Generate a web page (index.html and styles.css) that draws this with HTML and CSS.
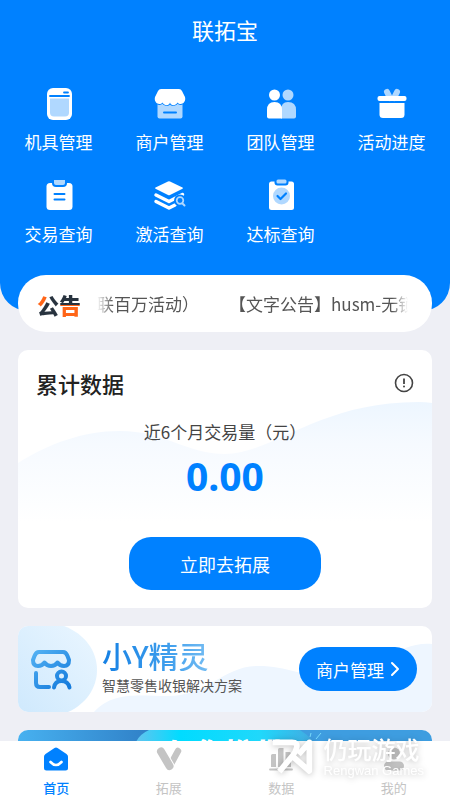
FILE: index.html
```html
<!DOCTYPE html>
<html lang="zh-CN">
<head>
<meta charset="utf-8">
<meta name="viewport" content="width=device-width, initial-scale=1">
<title>联拓宝</title>
<link rel="stylesheet" href="styles.css">
</head>
<body>
<div class="app">
  <main class="content">
    <header class="hero">
      <h1 class="hero-title">联拓宝</h1>
      <nav class="menu">
        <a class="menu-item" href="#">
          <svg class="menu-icon" viewBox="0 0 36 36"><rect x="6" y="2" width="25" height="32" rx="6" fill="#fff"/><path d="M9 12.500H28V26.500Q28 30.500 24 30.500H13Q9 30.500 9 26.500Z" fill="#b0d8ff"/><path d="M9 10H28M23 6.500H27" stroke="#0081ff" stroke-width="1.800" stroke-linecap="round"/></svg>
          <span>机具管理</span>
        </a>
        <a class="menu-item" href="#">
          <svg class="menu-icon" viewBox="0 0 36 36"><path d="M5.500 15H30.500V30.500Q30.500 32.500 28.500 32.500H7.500Q5.500 32.500 5.500 30.500Z" fill="#b0d8ff"/><path d="M9 3H27Q29 3 30 5L33 11C34.500 17 28.500 20 25.500 16.500C23.500 20 19 20 18 16.500C17 20 12.500 20 10.500 16.500C7.500 20 1.500 17 3 11L6 5Q7 3 9 3Z" fill="#fff" stroke="#0081ff" stroke-width="1.600" paint-order="stroke"/><path d="M12 26.500H24" stroke="#0081ff" stroke-width="2" stroke-linecap="round"/></svg>
          <span>商户管理</span>
        </a>
        <a class="menu-item" href="#">
          <svg class="menu-icon" viewBox="0 0 36 36"><circle cx="25" cy="9" r="5.500" fill="#b0d8ff"/><path d="M18 32.500V24Q18 16 25 16Q33 16 33 24V30.500Q33 32.500 31 32.500Z" fill="#b0d8ff"/><circle cx="11.500" cy="9" r="5.500" fill="#fff"/><path d="M4 30.500V24Q4 16 11.500 16Q19 16 19 24V32.500H6Q4 32.500 4 30.500Z" fill="#fff"/></svg>
          <span>团队管理</span>
        </a>
        <a class="menu-item" href="#">
          <svg class="menu-icon" viewBox="0 0 36 36"><path d="M13 6L16 12M23 6L20 12" stroke="#b0d8ff" stroke-width="6" stroke-linecap="round"/><rect x="3.500" y="10" width="29" height="5" rx="2" fill="#fff"/><path d="M5.500 17H30.500V28.500Q30.500 32 27 32H9Q5.500 32 5.500 28.500Z" fill="#fff"/></svg>
          <span>活动进度</span>
        </a>
        <a class="menu-item" href="#">
          <svg class="menu-icon" viewBox="0 0 36 36"><rect x="5.500" y="5" width="26" height="27" rx="3.500" fill="#fff"/><path d="M11 2H26V5Q26 9 22 9H15Q11 9 11 5Z" fill="#0081ff"/><path d="M13 2H24V5Q24 7 22 7H15Q13 7 13 5Z" fill="#b0d8ff"/><path d="M13.500 16H23.500M13.500 21.500H23.500" stroke="#0081ff" stroke-width="2" stroke-linecap="round"/></svg>
          <span>交易查询</span>
        </a>
        <a class="menu-item" href="#">
          <svg class="menu-icon" viewBox="0 0 36 36"><path d="M16 3.500Q17 3 18 3.500L30.500 9.500Q31.500 10 30.500 10.800L18 17Q17 17.500 16 17L3.500 10.800Q2.500 10 3.500 9.500Z" fill="#fff"/><path d="M4 17L17 23.500L30.500 16.500M4 23.500L17 30L23 27" fill="none" stroke="#fff" stroke-width="3.500" stroke-linecap="round" stroke-linejoin="round"/><circle cx="28" cy="22.500" r="6" fill="#0081ff"/><circle cx="28" cy="22.500" r="3.300" fill="none" stroke="#b0d8ff" stroke-width="1.700"/><path d="M30.500 25.500L32.500 27.500" stroke="#b0d8ff" stroke-width="2" stroke-linecap="round"/></svg>
          <span>激活查询</span>
        </a>
        <a class="menu-item" href="#">
          <svg class="menu-icon" viewBox="0 0 36 36"><rect x="6" y="3.500" width="25" height="28.500" rx="2.500" fill="#fff"/><rect x="11.500" y="0" width="14" height="7.500" rx="3" fill="#0081ff"/><rect x="13.500" y="1.500" width="10" height="4" rx="1.500" fill="#b0d8ff"/><circle cx="18.500" cy="18" r="8.500" fill="#b0d8ff"/><path d="M14.500 18L17.500 21L23 15.500" fill="none" stroke="#0081ff" stroke-width="2.200" stroke-linecap="round" stroke-linejoin="round"/></svg>
          <span>达标查询</span>
        </a>
      </nav>
    </header>

    <section class="notice">
      <strong class="notice-logo"><span class="notice-gong">公</span><span class="notice-gao">告</span></strong>
      <div class="ticker"><span>联百万活动）</span><span>【文字公告】husm-无锁</span></div>
    </section>

    <section class="card stats">
      <svg class="wave" viewBox="0 0 414 120" preserveAspectRatio="none" aria-hidden="true">
        <defs><linearGradient id="mist" x1="0" y1="0" x2="0" y2="1"><stop offset="0" stop-color="#edf6ff"/><stop offset=".35" stop-color="#f6faff"/><stop offset="1" stop-color="#fff"/></linearGradient></defs>
        <path d="M0 61C30 42 65 29 102 29C145 29 170 52 207 52C255 52 300 0 400 0Q408 0 414 1V120H0Z" fill="url(#mist)"/>
      </svg>
      <div class="stats-head">
        <h2 class="stats-title">累计数据</h2>
        <button class="info" type="button" aria-label="说明">
          <svg viewBox="0 0 20 20"><circle cx="10" cy="10" r="8.500" fill="none" stroke="#444" stroke-width="1.600"/><path d="M10 5.500V11" stroke="#444" stroke-width="1.800"/><circle cx="10" cy="13.500" r="1" fill="#444"/></svg>
        </button>
      </div>
      <p class="stats-label">近6个月交易量（元）</p>
      <p class="stats-value">0.00</p>
      <button class="primary" type="button">立即去拓展</button>
    </section>

    <section class="card genie">
      <svg class="genie-bg" viewBox="0 0 414 86" preserveAspectRatio="none" aria-hidden="true">
        <defs><linearGradient id="disc" x1="0" y1="1" x2="1" y2="0"><stop offset="0" stop-color="#cfe9fd"/><stop offset="1" stop-color="#eaf6ff"/></linearGradient></defs>
        <path d="M76 86C95 65 120 70 150 70C190 70 205 40 240 40C275 40 290 55 325 50C360 44 380 15 414 18V86Z" fill="#eef6ff"/>
        <path d="M0 0H46C67 8 79 25 79 44C79 62 68 78 50 86H0Z" fill="url(#disc)"/>
      </svg>
      <svg class="shop" viewBox="0 0 42 42" aria-hidden="true">
        <defs><linearGradient id="shop" gradientUnits="userSpaceOnUse" x1="0" y1="0" x2="34" y2="42"><stop offset="0" stop-color="#59b6f5"/><stop offset="1" stop-color="#147bdc"/></linearGradient></defs>
        <g fill="none" stroke="url(#shop)" stroke-width="4" stroke-linecap="round" stroke-linejoin="round">
          <path d="M9 4H33Q36 4 37.500 8L39 12Q39 18 34 18Q30 18 27.500 14.500Q25 18 21 18Q17 18 14.500 14.500Q12 18 8 18Q3 18 3 12L4.500 8Q6 4 9 4Z"/>
          <path d="M6 25V35Q6 39 10 39H19"/><circle cx="31.500" cy="28" r="4.500"/><path d="M24 39.500Q25 33 31.500 33Q38 33 39.500 39.500"/>
        </g>
      </svg>
      <div class="genie-text">
        <h2 class="genie-title">小Y精灵</h2>
        <p class="genie-sub">智慧零售收银解决方案</p>
      </div>
      <button class="merchant" type="button">商户管理
        <svg viewBox="0 0 10 16" aria-hidden="true"><path d="M2 2L8 8L2 14" fill="none" stroke="#fff" stroke-width="2" stroke-linecap="round" stroke-linejoin="round"/></svg>
      </button>
    </section>

    <section class="card promo">
      <svg class="promo-bg" viewBox="0 0 414 86" preserveAspectRatio="none" aria-hidden="true">
        <defs>
          <linearGradient id="side"><stop offset="0" stop-color="#47b1f0"/><stop offset="1" stop-color="#2f7fc6"/></linearGradient>
          <linearGradient id="core"><stop offset="0" stop-color="#63c4ef"/><stop offset=".25" stop-color="#00dcff"/><stop offset=".7" stop-color="#20d8fb"/><stop offset="1" stop-color="#43a9e0"/></linearGradient>
        </defs>
        <rect width="135" height="86" fill="url(#side)"/><rect x="280" width="134" height="86" fill="#3e9de0"/>
        <path d="M118 12Q122 4 131 0H282Q290 5 296 12V86H118Z" fill="url(#core)"/>
        <path d="M298 9L303 3M292 7L293 3" stroke="#79dafa" stroke-width="1"/>
      </svg>
      <p class="promo-title">与您携带</p>
    </section>
  </main>

  <nav class="tabs">
    <a class="tab tab-active" href="#">
      <svg viewBox="0 0 28 28"><path d="M12.500 3Q14 2 15.500 3L24.500 9Q26 10 26 11.500V23Q26 25.500 23.500 25.500H4.500Q2 25.500 2 23V11.500Q2 10 3.500 9Z" fill="currentColor"/><path d="M8.500 17Q14 23 19.500 17" fill="none" stroke="#fff" stroke-width="2.600" stroke-linecap="round"/></svg>
      <span>首页</span>
    </a>
    <a class="tab" href="#">
      <svg viewBox="0 0 28 28"><path d="M23 6L16.500 18" stroke="currentColor" stroke-width="6.500" stroke-linecap="round"/><path d="M6 6.500L14.500 21" stroke="#fff" stroke-width="10" stroke-linecap="round"/><path d="M6 6.500L14.500 21" stroke="currentColor" stroke-width="8" stroke-linecap="round"/></svg>
      <span>拓展</span>
    </a>
    <a class="tab" href="#">
      <svg viewBox="0 0 28 28"><path d="M4 10.500Q4 9 5.500 9H9V22H4ZM11 4.500Q11 3 12.500 3H16.500V22H11ZM18.500 7H22.500Q24 7 24 8.500V22H18.500Z" fill="currentColor"/><path d="M3 24.500H25" stroke="currentColor" stroke-width="1.800" stroke-linecap="round"/></svg>
      <span>数据</span>
    </a>
    <a class="tab" href="#">
      <svg viewBox="0 0 28 28"><circle cx="14" cy="8.500" r="6" fill="currentColor"/><rect x="4" y="16.500" width="20" height="9" rx="4.500" fill="currentColor"/></svg>
      <span>我的</span>
    </a>
    <div class="brand">
      <svg viewBox="0 0 132 116" aria-hidden="true"><path d="M8 14H66Q84 14 80 30Q77 44 66 56L28 102M70 58L118 100V14L86 50" fill="none" stroke="#fff" stroke-width="17" stroke-linejoin="round"/></svg>
      <p class="brand-text"><span class="brand-cn">仍玩游戏</span><span class="brand-en">Rengwan Games</span></p>
    </div>
  </nav>
</div>
</body>
</html>
```
FILE: styles.css
```css
* { box-sizing: border-box; }

body, h1, h2, p { margin: 0; }

body {
  background: #eeeff5;
  color: #222;
  font-family: "Noto Sans CJK SC", "Noto Sans", sans-serif;
}

a { color: inherit; text-decoration: none; }

button {
  padding: 0;
  border: 0;
  background: none;
  color: inherit;
  font-family: inherit;
  cursor: pointer;
}

svg { display: block; flex: none; fill: none; }

.app {
  display: flex;
  flex-direction: column;
  height: 100vh;
}

.content {
  flex: 1;
  min-height: 0;
  overflow-y: auto;
  scrollbar-width: none;
}

/* Header and shortcuts */
.hero {
  padding: 14px 3px 65px;
  border-radius: 0 0 28px 28px;
  background: #0081ff;
  color: #fff;
}

.hero-title {
  font-size: 22px;
  font-weight: 400;
  line-height: 30px;
  text-align: center;
}

.menu {
  display: grid;
  grid-template-columns: repeat(4, 1fr);
  row-gap: 24px;
  margin-top: 42px;
}

.menu-item {
  display: flex;
  flex-direction: column;
  align-items: center;
  gap: 8px;
  font-size: 17px;
  line-height: 24px;
}

.menu-icon { width: 36px; height: 36px; }

/* Announcement */
.notice {
  position: relative;
  display: flex;
  align-items: center;
  gap: 16px;
  height: 57px;
  margin: -36px 18px 18px;
  padding: 0 24px 0 19px;
  border-radius: 28px;
  background: #fff;
}

.notice-logo {
  font-size: 22px;
  font-weight: 900;
  line-height: 28px;
  white-space: nowrap;
}

.notice-gong, .notice-gao {
  background-clip: text;
  -webkit-background-clip: text;
  color: transparent;
}

.notice-gong { background-image: linear-gradient(125deg, #ff6518 40%, #28333f 40%); }
.notice-gao { background-image: linear-gradient(#28333f 54%, #ff6518 54%); }

.ticker {
  display: flex;
  flex: 1;
  gap: 30px;
  overflow: hidden;
  color: #555;
  font-size: 17px;
  line-height: 28px;
  white-space: nowrap;
  -webkit-mask-image: linear-gradient(90deg, transparent, #000 16px, #000 calc(100% - 16px), transparent);
  mask-image: linear-gradient(90deg, transparent, #000 16px, #000 calc(100% - 16px), transparent);
}

/* Cards */
.card {
  position: relative;
  margin: 0 18px 18px;
  border-radius: 10px;
  background: #fff;
  overflow: hidden;
}

.card > :not(.wave, .genie-bg, .promo-bg) { position: relative; }

.stats {
  display: flex;
  flex-direction: column;
  align-items: center;
  padding: 18px;
}

.wave {
  position: absolute;
  top: 52px;
  left: 0;
  width: 100%;
  height: 120px;
}

.stats-head {
  display: flex;
  align-items: center;
  justify-content: space-between;
  width: 100%;
}

.stats-title {
  font-size: 22px;
  font-weight: 500;
  line-height: 30px;
}

.info svg { width: 20px; height: 20px; }

.stats-label {
  margin-top: 22px;
  color: #444;
  font-size: 17px;
  line-height: 24px;
}

.stats-value {
  margin-top: 8px;
  color: #0081ff;
  font-family: "Noto Sans", sans-serif;
  font-size: 39px;
  font-weight: 700;
  line-height: 48px;
}

.primary {
  width: 192px;
  height: 53px;
  margin-top: 37px;
  border-radius: 22px;
  background: #0081ff;
  color: #fff;
  font-size: 18px;
}

/* Merchant banner */
.genie {
  display: flex;
  align-items: center;
  height: 86px;
  padding: 0 15px 0 12px;
}

.genie-bg, .promo-bg {
  position: absolute;
  inset: 0;
  width: 100%;
  height: 100%;
}

.shop { width: 42px; height: 42px; }

.genie-text { flex: 1; margin-left: 30px; white-space: nowrap; }

.genie-title {
  width: max-content;
  background: linear-gradient(90deg, #1580e4, #3d9dec 60%, #75bdf3);
  background-clip: text;
  -webkit-background-clip: text;
  color: transparent;
  font-size: 30px;
  font-weight: 500;
  line-height: 32px;
}

.genie-sub {
  color: #555;
  font-size: 14px;
  line-height: 28px;
}

.merchant {
  display: flex;
  align-items: center;
  justify-content: center;
  gap: 6px;
  width: 118px;
  height: 44px;
  border-radius: 22px;
  background: #0081ff;
  color: #fff;
  font-size: 17px;
}

.merchant svg { width: 10px; height: 16px; }

/* Promotion banner */
.promo { height: 86px; }

.promo-title {
  padding-top: 2px;
  color: #fff;
  font-size: 30px;
  font-weight: 900;
  line-height: 40px;
  text-align: center;
  text-shadow: 1px 1px 1px #276ab8;
}

/* Bottom tabs */
.tabs {
  position: relative;
  display: grid;
  grid-template-columns: repeat(4, 1fr);
  height: 59px;
  padding-top: 4px;
  background: #fff;
  color: #c4c4c4;
}

.tab {
  display: flex;
  flex-direction: column;
  align-items: center;
  gap: 6px;
  font-size: 13px;
  line-height: 18px;
}

.tab svg { width: 28px; height: 28px; }

.tab-active { color: #0081ff; font-weight: 500; }

/* Brand mark laid over the tabs */
.brand {
  position: absolute;
  right: 26px;
  bottom: 21px;
  display: flex;
  align-items: center;
  gap: 10px;
  color: #fff;
  filter: drop-shadow(0 1px 3px rgb(0 0 0 / 24%));
  pointer-events: none;
}

.brand svg { width: 44px; height: 40px; }

.brand-text { display: flex; flex-direction: column; white-space: nowrap; }

.brand-cn { font-size: 24px; font-weight: 500; line-height: 28px; }

.brand-en {
  font-family: "Liberation Sans", sans-serif;
  font-size: 13px;
  line-height: 16px;
}
```
